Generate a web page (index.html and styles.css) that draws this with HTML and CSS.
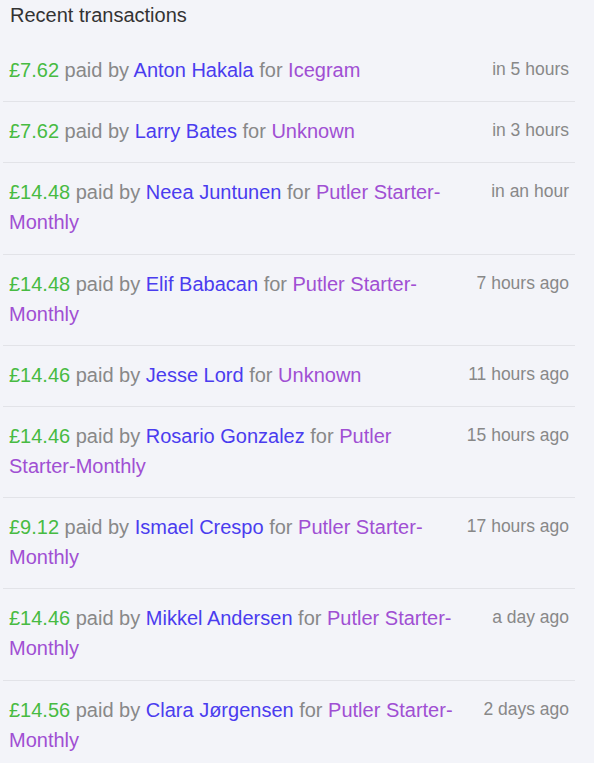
FILE: index.html
```html
<!DOCTYPE html>
<html lang="en">
<head>
  <meta charset="UTF-8" />
  <title>Recent transactions</title>
  <link rel="stylesheet" href="styles.css">
</head>
<body>
  <section class="panel">
    <h3>Recent transactions</h3>
    <ul class="tx-list">
      <li><p><span class="amt">£7.62</span> paid by <span class="who">Anton Hakala</span> for <span class="prod">Icegram</span></p><time>in 5 hours</time></li>
      <li><p><span class="amt">£7.62</span> paid by <span class="who">Larry Bates</span> for <span class="prod">Unknown</span></p><time>in 3 hours</time></li>
      <li><p><span class="amt">£14.48</span> paid by <span class="who">Neea Juntunen</span> for <span class="prod">Putler Starter-Monthly</span></p><time>in an hour</time></li>
      <li><p><span class="amt">£14.48</span> paid by <span class="who">Elif Babacan</span> for <span class="prod">Putler Starter-Monthly</span></p><time>7 hours ago</time></li>
      <li><p><span class="amt">£14.46</span> paid by <span class="who">Jesse Lord</span> for <span class="prod">Unknown</span></p><time>11 hours ago</time></li>
      <li><p><span class="amt">£14.46</span> paid by <span class="who">Rosario Gonzalez</span> for <span class="prod">Putler Starter-Monthly</span></p><time>15 hours ago</time></li>
      <li><p><span class="amt">£9.12</span> paid by <span class="who">Ismael Crespo</span> for <span class="prod">Putler Starter-Monthly</span></p><time>17 hours ago</time></li>
      <li><p><span class="amt">£14.46</span> paid by <span class="who">Mikkel Andersen</span> for <span class="prod">Putler Starter-Monthly</span></p><time>a day ago</time></li>
      <li><p><span class="amt">£14.56</span> paid by <span class="who">Clara Jørgensen</span> for <span class="prod">Putler Starter-Monthly</span></p><time>2 days ago</time></li>
    </ul>
  </section>
</body>
</html>
```

FILE: styles.css
```css
*{box-sizing:border-box;font-family:"Liberation Sans",Arial,sans-serif}
body{margin:0;background:#f3f4f9;color:#333}
.panel{padding:0 19px 0 3px}
.panel h3{
  margin:0;padding:3px 7px 0;
  font-size:20px;font-weight:400;line-height:24px;color:#333;
  height:41px;
}
.tx-list{list-style:none;margin:0;padding:0}
.tx-list li{
  display:flex;justify-content:space-between;align-items:flex-start;gap:24px;
  padding:14.1px 6px 16.1px 6px;
  border-bottom:1px solid #e2e3e8;
}
.tx-list li:last-child{border-bottom:none}
.tx-list p{margin:0;font-size:20px;line-height:30px;color:#888}
.tx-list time{
  flex:none;font-size:17.5px;line-height:28px;color:#888;white-space:nowrap;
}
.amt{color:#47bb42}
.who{color:#4a3cef}
.prod{color:#a04fd3}
```
